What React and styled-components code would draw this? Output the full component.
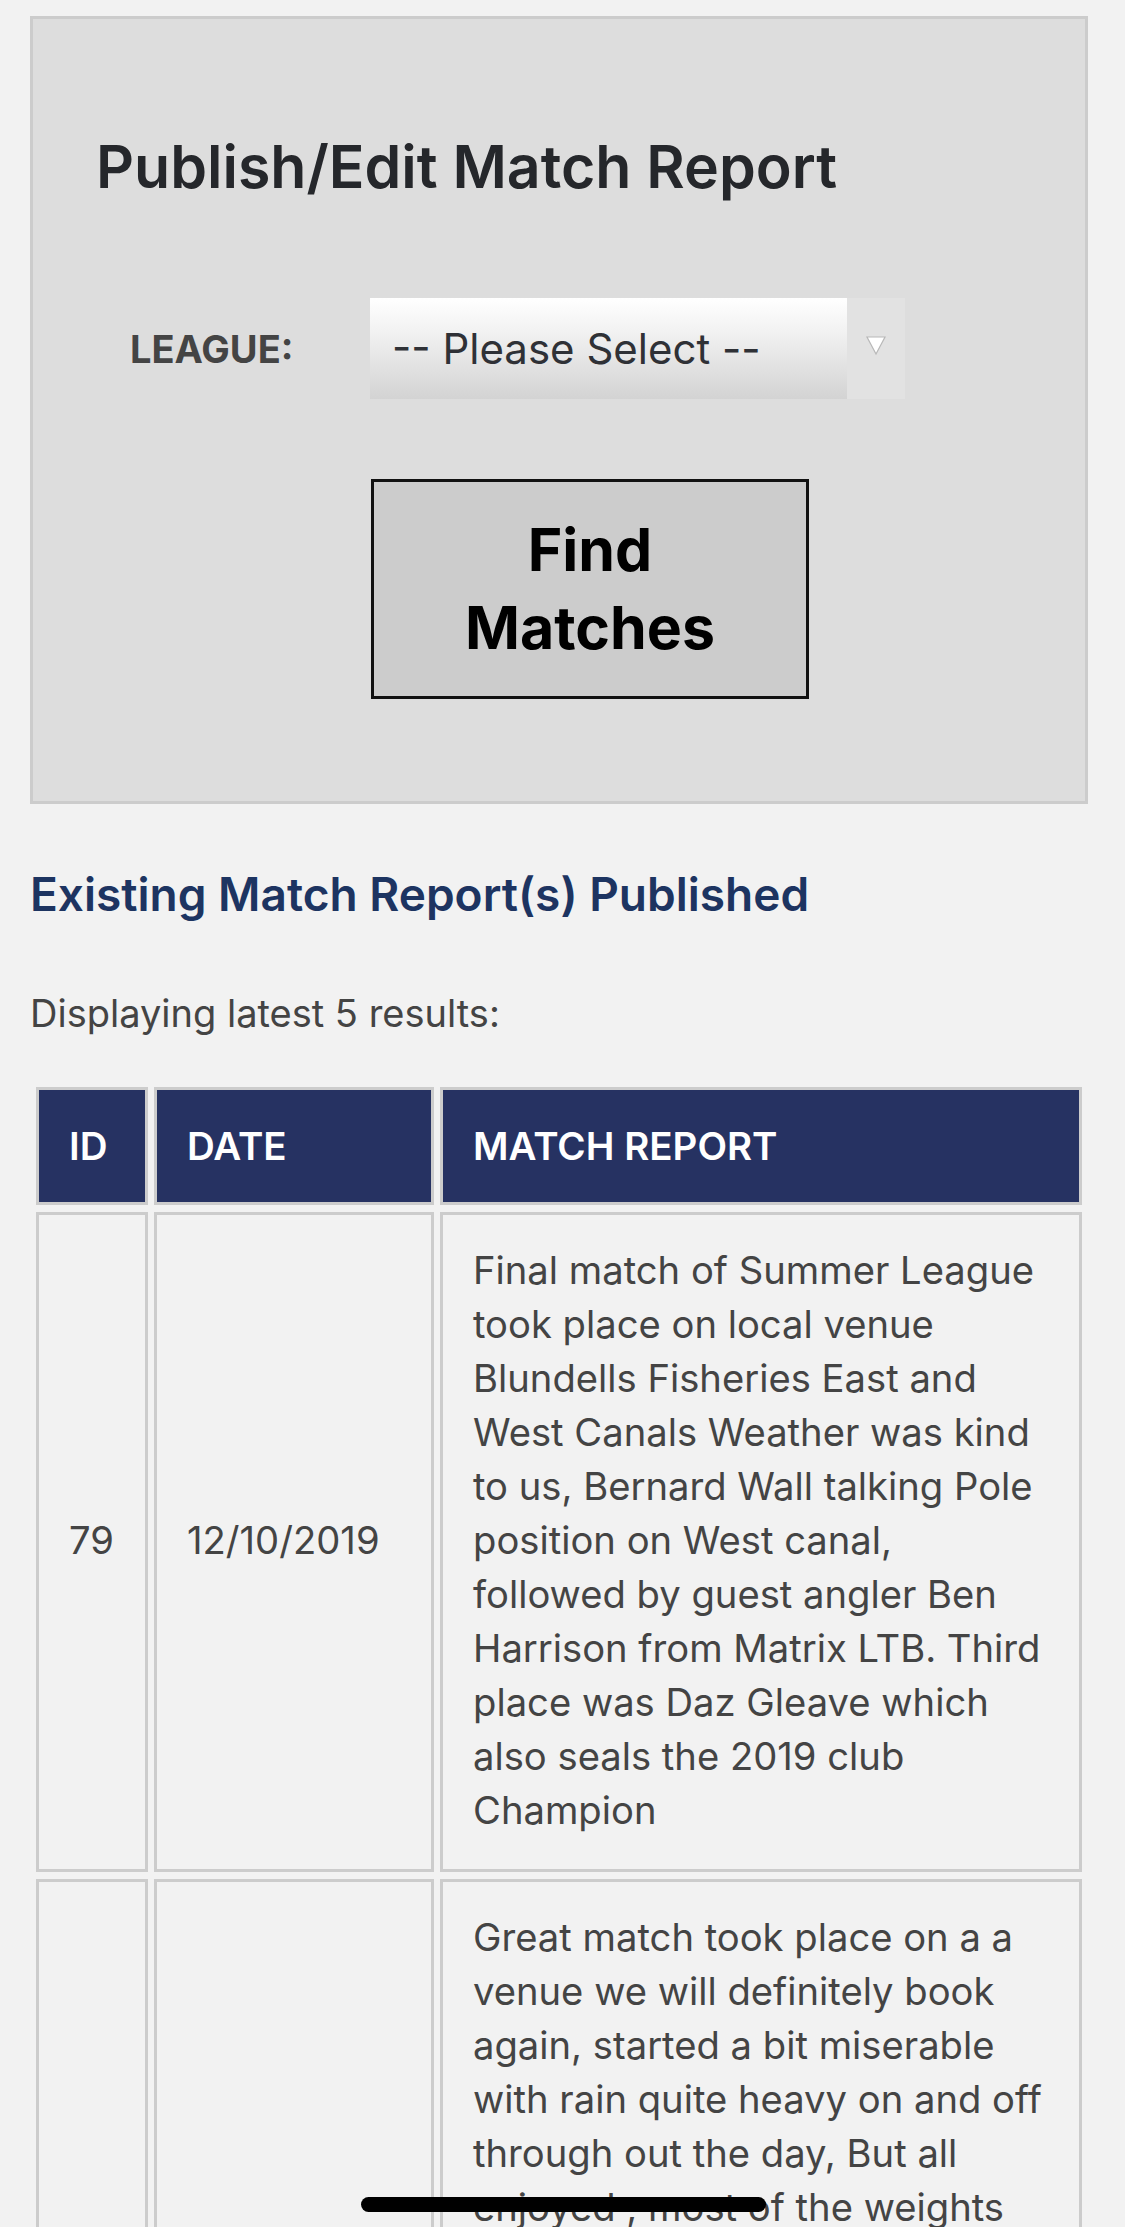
import React from 'react'
import styled, { createGlobalStyle } from 'styled-components'

const FONT = `Inter, "Liberation Sans", Arial, sans-serif`

const GlobalStyle = createGlobalStyle`
  html, body {
    margin: 0;
    padding: 0;
    background: #f2f2f2;
  }
  body {
    font-family: ${FONT};
    color: #444;
  }
  * {
    box-sizing: border-box;
  }
`

const Page = styled.div`
  padding: 16px 37px 0 30px;
`

const Panel = styled.form`
  background: #dddddd;
  border: 3px solid #cccccc;
  padding: 112px 0 102px 63px;
`

const Title = styled.h2`
  margin: 0;
  font-size: 59px;
  line-height: 72px;
  font-weight: 600;
  color: #25272b;
`

const FieldRow = styled.div`
  display: grid;
  grid-template-columns: 240px auto;
  align-items: center;
  margin: 95px 0 0 34px;
`

const Label = styled.label`
  font-size: 38px;
  font-weight: 700;
  color: #444;
`

const SelectWrap = styled.div`
  display: flex;
  width: 535px;
  height: 101px;
`

const Select = styled.select`
  appearance: none;
  -webkit-appearance: none;
  flex: 1;
  border: 0;
  border-radius: 0;
  margin: 0;
  padding: 0 0 0 22px;
  font-family: ${FONT};
  font-size: 42px;
  color: #2f3136;
  background: linear-gradient(#ffffff 0%, #f1f1f1 35%, #d3d3d3 100%);
  outline: none;
`

const ArrowBox = styled.span`
  width: 58px;
  background: #e2e2e2;
  display: flex;
  justify-content: center;
  padding-top: 36px;
`

const FindButton = styled.button`
  display: block;
  margin: 80px 0 0 275px;
  width: 438px;
  height: 220px;
  padding: 0 70px;
  border: 3px solid #111;
  background: #cccccc;
  font-family: ${FONT};
  font-size: 59px;
  line-height: 78px;
  font-weight: 700;
  color: #000;
`

const SectionTitle = styled.h3`
  margin: 64px 0 0;
  font-size: 46px;
  line-height: 53px;
  font-weight: 600;
  color: #1d3461;
`

const Note = styled.p`
  margin: 65px 0 0;
  font-size: 38px;
  line-height: 54px;
  color: #444;
`

const Table = styled.table`
  margin-top: 40px;
  width: 100%;
  table-layout: fixed;
  border-collapse: separate;
  border-spacing: 6px 7px;
`

const HeadCell = styled.th`
  width: ${p => p.$w || 'auto'};
  background: #263262;
  border: 3px solid #cccccc;
  padding: 29px 26px 29px 30px;
  text-align: left;
  font-size: 38.5px;
  line-height: 54px;
  font-weight: 600;
  color: #fff;
`

const Cell = styled.td`
  border: 3px solid #cccccc;
  padding: 28px 26px 32px 30px;
  vertical-align: middle;
  font-size: 38.2px;
  line-height: 54px;
  color: #444;
`

const HomeBar = styled.div`
  position: fixed;
  left: 50%;
  bottom: 15px;
  width: 405px;
  height: 15px;
  margin-left: -202px;
  border-radius: 8px;
  background: #000;
`

const reports = [
  {
    id: 79,
    date: '12/10/2019',
    text: 'Final match of Summer League took place on local venue Blundells Fisheries East and West Canals Weather was kind to us, Bernard Wall talking Pole position on West canal, followed by guest angler Ben Harrison from Matrix LTB. Third place was Daz Gleave which also seals the 2019 club Champion',
  },
  {
    id: 78,
    date: '28/09/2019',
    text: 'Great match took place on a a venue we will definitely book again, started a bit miserable with rain quite heavy on and off through out the day, But all enjoyed , most of the weights were down on previous weeks but plenty of fish caught by all anglers on the day, well done to the winner who fished the far bank with pellet all day and thanks to the fishery for a warm welcome and well kept pegs, everyone is looking forward to the next visit later in the season when the fish should be feeding hard again.',
  },
]

export default function App() {
  return (
    <>
      <GlobalStyle />
      <Page>
        <Panel onSubmit={e => e.preventDefault()}>
          <Title>Publish/Edit Match Report</Title>
          <FieldRow>
            <Label htmlFor="league">LEAGUE:</Label>
            <SelectWrap>
              <Select id="league" defaultValue="">
                <option value="">-- Please Select --</option>
              </Select>
              <ArrowBox>
                <svg width="22" height="22" viewBox="0 0 22 22">
                  <path d="M2 3 L20 3 L11 20 Z" fill="#fff" stroke="#b8b8b8" strokeWidth="1.2" />
                </svg>
              </ArrowBox>
            </SelectWrap>
          </FieldRow>
          <FindButton type="submit">Find Matches</FindButton>
        </Panel>

        <SectionTitle>Existing Match Report(s) Published</SectionTitle>
        <Note>Displaying latest 5 results:</Note>

        <Table>
          <thead>
            <tr>
              <HeadCell $w="112px">ID</HeadCell>
              <HeadCell $w="280px">DATE</HeadCell>
              <HeadCell>MATCH REPORT</HeadCell>
            </tr>
          </thead>
          <tbody>
            {reports.map(r => (
              <tr key={r.id}>
                <Cell>{r.id}</Cell>
                <Cell>{r.date}</Cell>
                <Cell>{r.text}</Cell>
              </tr>
            ))}
          </tbody>
        </Table>
      </Page>
      <HomeBar />
    </>
  )
}
